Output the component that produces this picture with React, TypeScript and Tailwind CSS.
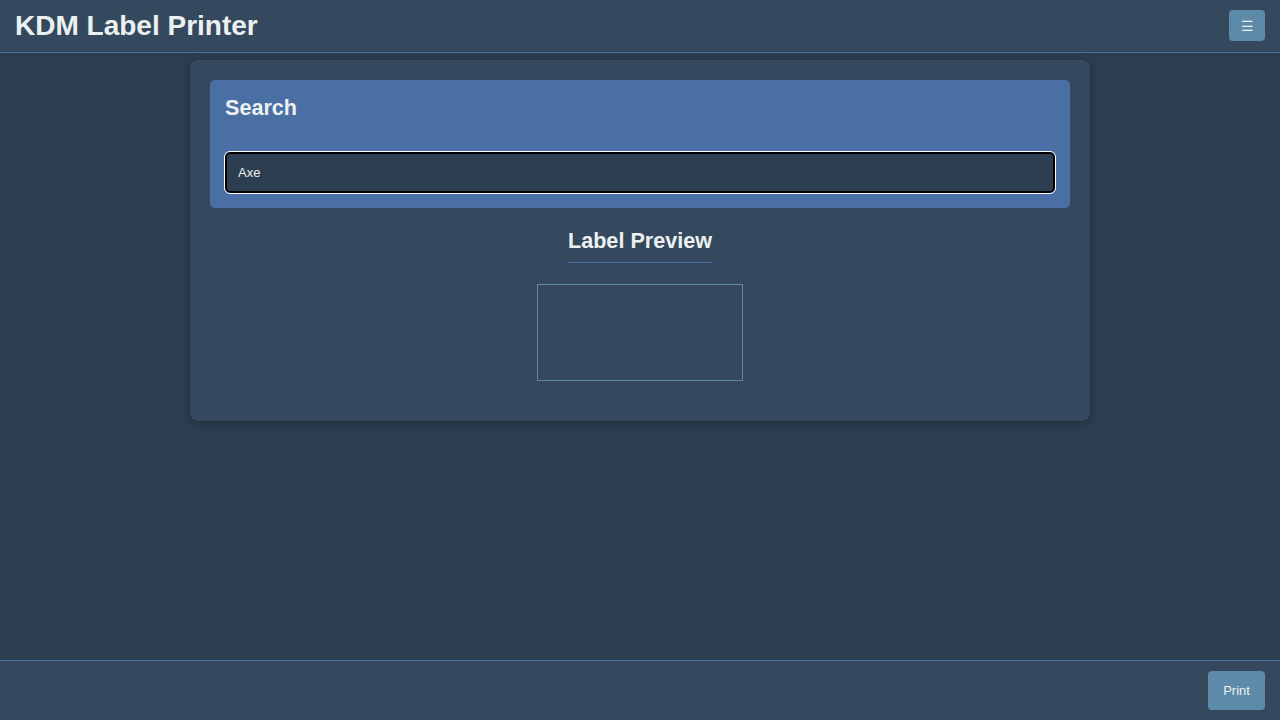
export default function App() {
    return (
        <div className="min-h-screen w-full bg-[#2c3e50] flex flex-col font-['Liberation_Sans',Arial,sans-serif] text-[#ecf0f1]">
            {/* Header */}
            <header className="h-[53px] flex items-center justify-between px-[15px] bg-[#34495e] border-b border-[#4a6fa5]">
                <h1 className="text-[28px] font-bold leading-none">KDM Label Printer</h1>
                <button
                    type="button"
                    className="w-[36px] h-[31px] -mt-[1px] rounded-[4px] bg-[#5d8aa8] text-[14px] leading-none flex items-center justify-center"
                >
                    ☰
                </button>
            </header>

            {/* Main */}
            <main className="flex-1 flex justify-center pt-[7px]">
                <div className="w-[900px] h-fit p-[20px] bg-[#34495e] rounded-[8px] shadow-[0_2px_10px_rgba(0,0,0,0.3)]">
                    {/* Search */}
                    <div className="bg-[#4a6fa5] rounded-[5px] p-[15px]">
                        <h2 className="text-[21.6px] font-bold leading-[25px] mb-[32px]">Search</h2>
                        <input
                            type="text"
                            defaultValue="Axe"
                            className="w-full h-[41px] px-[11px] rounded-[5px] bg-[#2c3e50] border-2 border-black outline outline-1 outline-white text-[13px] text-[#ecf0f1]"
                        />
                    </div>

                    {/* Preview */}
                    <div className="flex flex-col items-center mt-[20px] pb-[20px]">
                        <h3 className="text-[21.6px] font-bold leading-[25px] pb-[9px] border-b border-[#4a6fa5]">
                            Label Preview
                        </h3>
                        <div className="mt-[21px] w-[206px] h-[97px] border border-[#5d8aa8]" />
                    </div>
                </div>
            </main>

            {/* Footer */}
            <footer className="h-[60px] flex items-center justify-end px-[15px] bg-[#34495e] border-t border-[#4a6fa5]">
                <button
                    type="button"
                    className="w-[57px] h-[39px] rounded-[4px] bg-[#5d8aa8] text-[13px] text-[#ecf0f1]"
                >
                    Print
                </button>
            </footer>
        </div>
    );
}
